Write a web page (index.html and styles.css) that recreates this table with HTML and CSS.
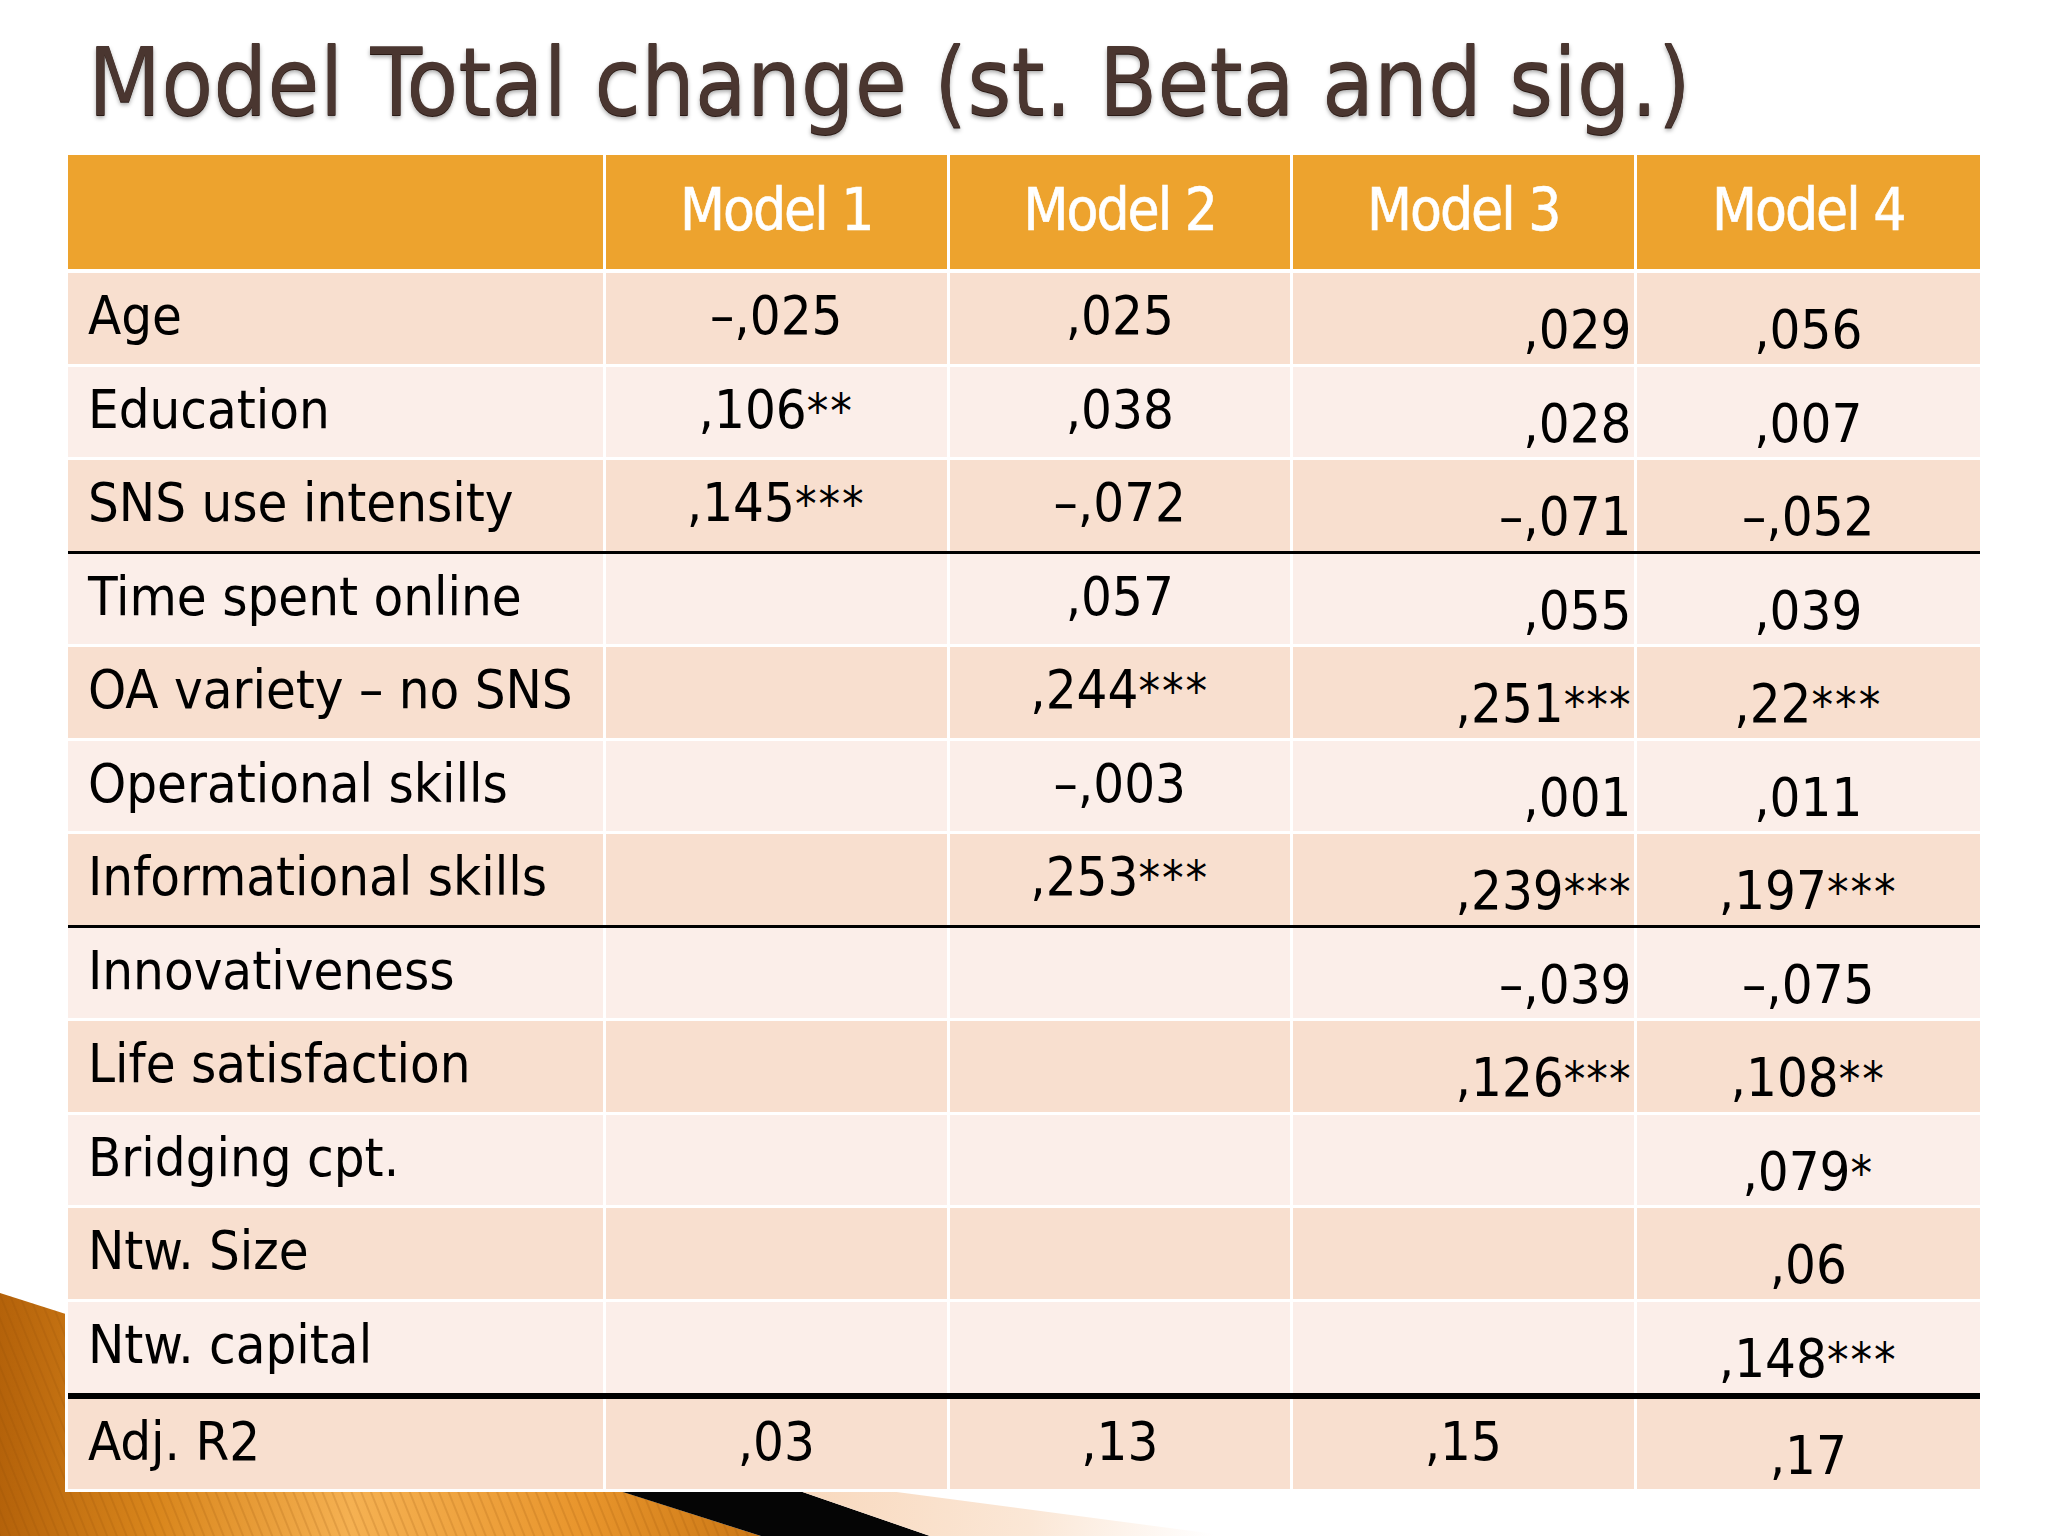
FILE: index.html
```html
<!DOCTYPE html>
<html lang="en">
<head>
<meta charset="utf-8">
<title>Model Total change</title>
<link rel="stylesheet" href="styles.css">
</head>
<body>
<div class="slide">
  <svg class="deco" width="2048" height="1536" viewBox="0 0 2048 1536" aria-hidden="true">
    <defs>
      <linearGradient id="orangeGrad" x1="0" y1="0" x2="780" y2="0" gradientUnits="userSpaceOnUse">
        <stop offset="0" stop-color="#b4620a"/>
        <stop offset="0.2" stop-color="#d9861c"/>
        <stop offset="0.45" stop-color="#f5b152"/>
        <stop offset="0.75" stop-color="#e8952c"/>
        <stop offset="1" stop-color="#c87412"/>
      </linearGradient>
      <pattern id="stripes" width="9" height="9" patternUnits="userSpaceOnUse" patternTransform="rotate(-22)">
        <line x1="1" y1="0" x2="1" y2="9" stroke="#8a4a05" stroke-opacity="0.22" stroke-width="1.5"/>
      </pattern>
      <linearGradient id="peachGrad" x1="757" y1="1489" x2="1214" y2="1536" gradientUnits="userSpaceOnUse">
        <stop offset="0" stop-color="#f8d6b9"/>
        <stop offset="0.6" stop-color="#fbe7d6"/>
        <stop offset="1" stop-color="#ffffff"/>
      </linearGradient>
    </defs>
    <polygon points="0,1293 761,1536 0,1536" fill="url(#orangeGrad)"/>
    <polygon points="0,1293 761,1536 0,1536" fill="url(#stripes)"/>
    <polygon points="560,1472 745,1472 930,1536 761,1536" fill="#050505"/>
    <polygon points="745,1472 1230,1536 930,1536" fill="url(#peachGrad)"/>
  </svg>

  <h1 class="title">Model Total change (st. Beta and sig.)</h1>

  <div class="table" role="table">
    <div class="row head" role="row">
      <div class="cell" role="columnheader"></div>
      <div class="cell" role="columnheader">Model 1</div>
      <div class="cell" role="columnheader">Model 2</div>
      <div class="cell" role="columnheader">Model 3</div>
      <div class="cell" role="columnheader">Model 4</div>
    </div>

    <div class="row dark" role="row">
      <div class="cell lbl">Age</div>
      <div class="cell hi">–,025</div>
      <div class="cell hi">,025</div>
      <div class="cell lo right">,029</div>
      <div class="cell lo">,056</div>
    </div>
    <div class="row light" role="row">
      <div class="cell lbl">Education</div>
      <div class="cell hi">,106<span class="sig">**</span></div>
      <div class="cell hi">,038</div>
      <div class="cell lo right">,028</div>
      <div class="cell lo">,007</div>
    </div>
    <div class="row dark sep" role="row">
      <div class="cell lbl">SNS use intensity</div>
      <div class="cell hi">,145<span class="sig">***</span></div>
      <div class="cell hi">–,072</div>
      <div class="cell lo right">–,071</div>
      <div class="cell lo">–,052</div>
    </div>
    <div class="row light" role="row">
      <div class="cell lbl">Time spent online</div>
      <div class="cell hi"></div>
      <div class="cell hi">,057</div>
      <div class="cell lo right">,055</div>
      <div class="cell lo">,039</div>
    </div>
    <div class="row dark" role="row">
      <div class="cell lbl">OA variety – no SNS</div>
      <div class="cell hi"></div>
      <div class="cell hi">,244<span class="sig">***</span></div>
      <div class="cell lo right">,251<span class="sig">***</span></div>
      <div class="cell lo">,22<span class="sig">***</span></div>
    </div>
    <div class="row light" role="row">
      <div class="cell lbl">Operational skills</div>
      <div class="cell hi"></div>
      <div class="cell hi">–,003</div>
      <div class="cell lo right">,001</div>
      <div class="cell lo">,011</div>
    </div>
    <div class="row dark sep" role="row">
      <div class="cell lbl">Informational skills</div>
      <div class="cell hi"></div>
      <div class="cell hi">,253<span class="sig">***</span></div>
      <div class="cell lo right">,239<span class="sig">***</span></div>
      <div class="cell lo">,197<span class="sig">***</span></div>
    </div>
    <div class="row light" role="row">
      <div class="cell lbl">Innovativeness</div>
      <div class="cell hi"></div>
      <div class="cell hi"></div>
      <div class="cell lo right">–,039</div>
      <div class="cell lo">–,075</div>
    </div>
    <div class="row dark" role="row">
      <div class="cell lbl">Life satisfaction</div>
      <div class="cell hi"></div>
      <div class="cell hi"></div>
      <div class="cell lo right">,126<span class="sig">***</span></div>
      <div class="cell lo">,108<span class="sig">**</span></div>
    </div>
    <div class="row light" role="row">
      <div class="cell lbl">Bridging cpt.</div>
      <div class="cell hi"></div>
      <div class="cell hi"></div>
      <div class="cell lo right"></div>
      <div class="cell lo">,079<span class="sig">*</span></div>
    </div>
    <div class="row dark" role="row">
      <div class="cell lbl">Ntw. Size</div>
      <div class="cell hi"></div>
      <div class="cell hi"></div>
      <div class="cell lo right"></div>
      <div class="cell lo">,06</div>
    </div>
    <div class="row light sep-thick" role="row">
      <div class="cell lbl">Ntw. capital</div>
      <div class="cell hi"></div>
      <div class="cell hi"></div>
      <div class="cell lo right"></div>
      <div class="cell lo">,148<span class="sig">***</span></div>
    </div>
    <div class="row dark last" role="row">
      <div class="cell lbl">Adj. R2</div>
      <div class="cell hi">,03</div>
      <div class="cell hi">,13</div>
      <div class="cell hi">,15</div>
      <div class="cell lo">,17</div>
    </div>
  </div>
</div>
</body>
</html>
```

FILE: styles.css
```css
html, body {
  margin: 0;
  padding: 0;
  background: #ffffff;
}

.slide {
  position: relative;
  width: 2048px;
  height: 1536px;
  overflow: hidden;
  background: #ffffff;
  font-family: "DejaVu Sans Condensed", "DejaVu Sans", sans-serif;
  font-stretch: condensed;
  color: #000000;
  display: flex;
  flex-direction: column;
}

.deco {
  position: absolute;
  left: 0;
  top: 0;
  z-index: 0;
}

.title {
  position: relative;
  z-index: 1;
  margin: 35px 0 0 88px;
  font-size: 94.5px;
  line-height: 94px;
  font-weight: normal;
  color: #4a3630;
  text-shadow: 0 1px 0 #2a1a15, 0 3px 4px rgba(0, 0, 0, 0.35), 0 -1px 0 rgba(255, 255, 255, 0.5);
  white-space: nowrap;
}

.table {
  position: relative;
  z-index: 1;
  margin: 23px 0 0 65px;
  width: 1912px;
  border: 3px solid #ffffff;
  display: flex;
  flex-direction: column;
}

.row {
  display: grid;
  grid-template-columns: 538px 343.5px 343.5px 343.5px 343.5px;
  height: 93.5px;
  box-sizing: border-box;
  border-bottom: 3px solid #ffffff;
}

.row.last {
  border-bottom: none;
  height: 90px;
}

.row.dark {
  background: #f8dfcf;
}

.row.light {
  background: #fbeee9;
}

.row.sep {
  border-bottom: 3px solid #000000;
}

.row.sep-thick {
  height: 97.5px;
  border-bottom: 6px solid #000000;
}

.cell {
  box-sizing: border-box;
  border-right: 3px solid #ffffff;
  font-size: 54px;
  line-height: 60px;
  padding-top: 13px;
  text-align: center;
  white-space: nowrap;
}

.cell:last-child {
  border-right: none;
}

.cell.lbl {
  text-align: left;
  padding-left: 20px;
}

.cell.lo {
  padding-top: 27px;
}

.cell.right {
  text-align: right;
  padding-right: 2px;
}

.sig {
  font-size: 48px;
  letter-spacing: 2px;
}

.cell.right .sig {
  letter-spacing: 1px;
}

.row.head {
  height: 118px;
  background: #eda32e;
  border-bottom: 4px solid #ffffff;
}

.row.head .cell {
  color: #ffffff;
  font-size: 58px;
  line-height: 70px;
  padding-top: 20px;
  letter-spacing: -2px;
  -webkit-text-stroke: 0.6px #ffffff;
}
```
